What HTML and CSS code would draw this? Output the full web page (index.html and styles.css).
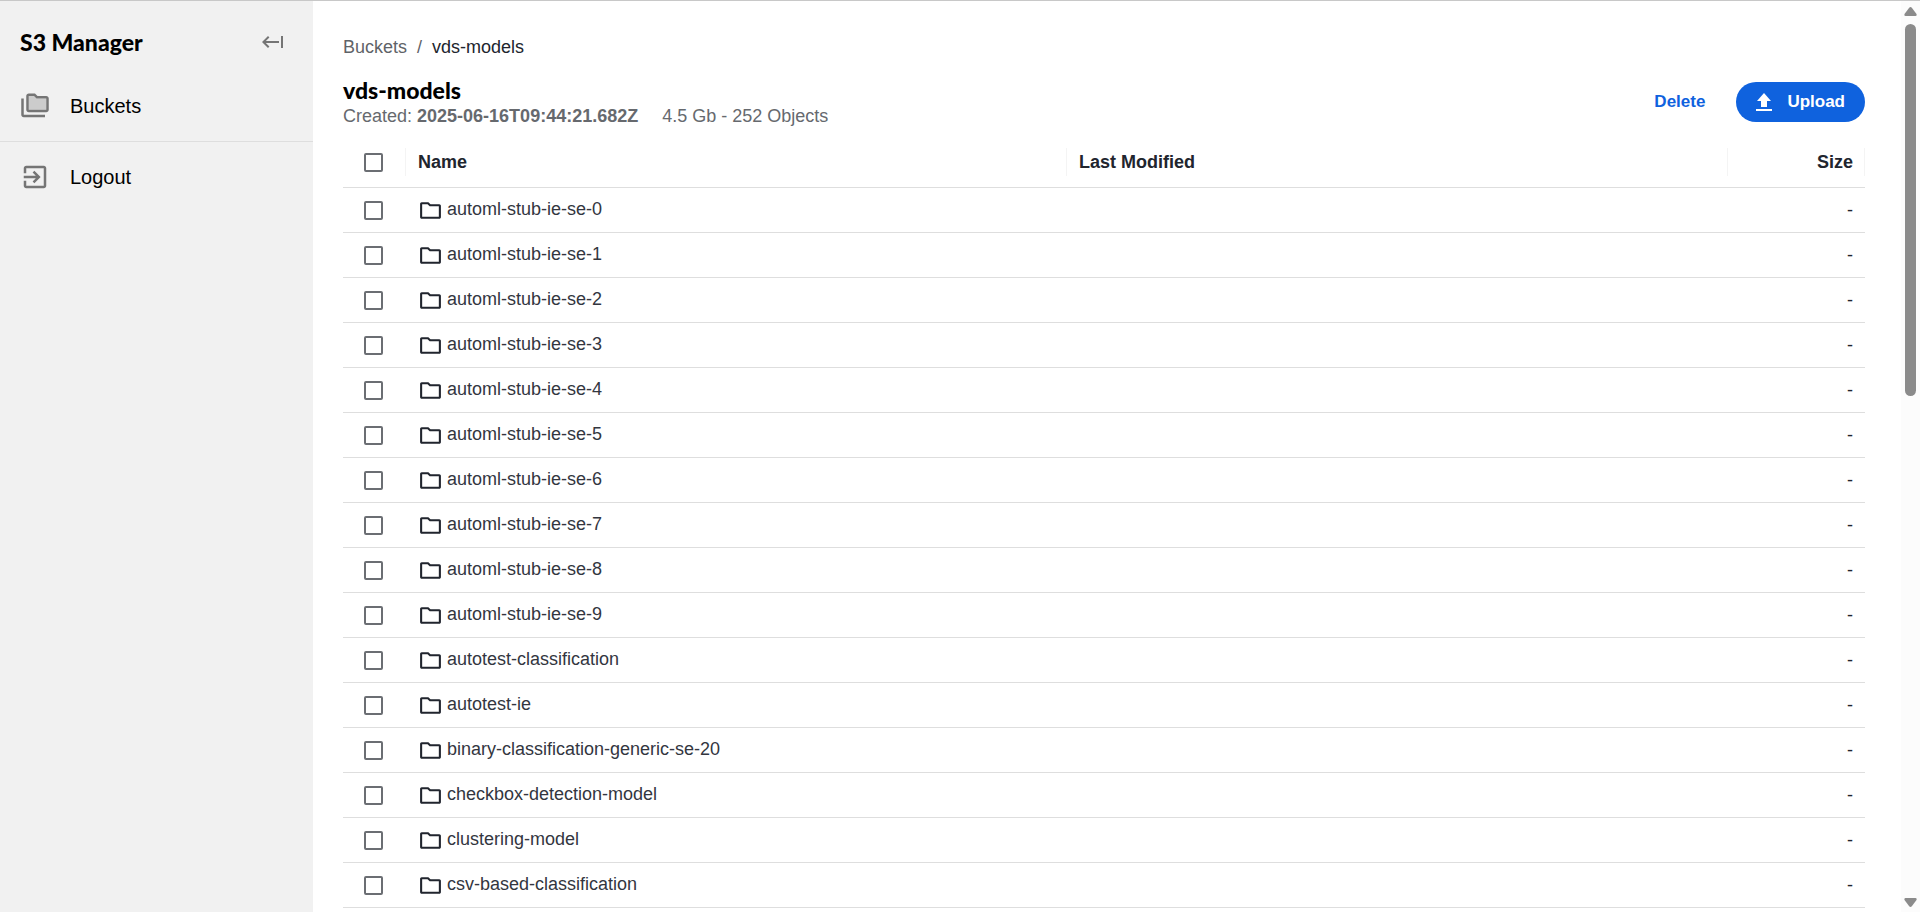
FILE: index.html
```html
<!DOCTYPE html>
<html lang="en">
<head>
  <meta charset="UTF-8">
  <title>S3 Manager</title>
  <link rel="stylesheet" href="styles.css">
</head>
<body>

<div class="app">
  <aside class="sidebar">
    <div class="sidebar-header">
      <span class="brand">S3 Manager</span>
      <button class="collapse-btn" aria-label="Collapse menu">
        <svg width="24" height="24" viewBox="0 0 24 24"><path d="M8.410 7.410 4.830 11H18v2H4.830l3.580 3.590L7 18l-6-6 6-6zM20 6h2v12h-2z"/></svg>
      </button>
    </div>
    <nav>
      <a class="nav-item" href="#">
        <svg width="30" height="30" viewBox="0 0 24 24">
          <path class="tint" d="M7 4h4.17l2 2H21v9H7z"/>
          <path d="M3 6H1v13c0 1.1.9 2 2 2h17v-2H3V6zM21 4h-7l-2-2H7c-1.1 0-2 .9-2 2v11c0 1.1.9 2 2 2h14c1.1 0 2-.9 2-2V6c0-1.1-.9-2-2-2zm0 11H7V4h4.17l2 2H21v9z"/>
        </svg>
        <span>Buckets</span>
      </a>
      <hr>
      <a class="nav-item" href="#">
        <svg width="30" height="30" viewBox="0 0 24 24"><path d="M10.09 15.59 11.5 17l5-5-5-5-1.41 1.41L12.67 11H3v2h9.67l-2.58 2.59zM19 3H5c-1.11 0-2 .9-2 2v4h2V5h14v14H5v-4H3v4c0 1.1.89 2 2 2h14c1.1 0 2-.9 2-2V5c0-1.1-.9-2-2-2z"/></svg>
        <span>Logout</span>
      </a>
    </nav>
  </aside>

  <main class="content">
    <div class="breadcrumb">
      <a href="#">Buckets</a>
      <span>/</span>
      <span class="current">vds-models</span>
    </div>

    <header class="bucket-header">
      <div>
        <h1>vds-models</h1>
        <div class="meta">
          <span>Created: <strong>2025-06-16T09:44:21.682Z</strong></span>
          <span>4.5 Gb - 252 Objects</span>
        </div>
      </div>
      <div class="actions">
        <button class="delete-btn">Delete</button>
        <button class="upload-btn">
          <svg width="16" height="18" viewBox="0 0 16 18"><path d="M8 0 1 8h4v6h6V8h4zM0 16h16v2H0z"/></svg>
          Upload
        </button>
      </div>
    </header>

    <table id="objectsTable">
      <thead>
        <tr>
          <th class="col-check"><input type="checkbox" aria-label="Select all"></th>
          <th>Name</th>
          <th>Last Modified</th>
          <th class="col-size">Size</th>
        </tr>
      </thead>
      <tbody></tbody>
    </table>
  </main>

  <div class="scrollbar" aria-hidden="true">
    <svg width="13" height="9" viewBox="0 0 13 9"><path d="M5 1Q6.500 -1 8 1L12.500 7Q13 9 11.500 9H1.500Q0 9 .5 7z"/></svg>
    <div class="track"><div class="thumb"></div></div>
    <svg width="13" height="9" viewBox="0 0 13 9"><path d="M5 8Q6.500 10 8 8L12.500 2Q13 0 11.500 0H1.500Q0 0 .5 2z"/></svg>
  </div>
</div>

<script>
  const folders = [
    'automl-stub-ie-se-0',
    'automl-stub-ie-se-1',
    'automl-stub-ie-se-2',
    'automl-stub-ie-se-3',
    'automl-stub-ie-se-4',
    'automl-stub-ie-se-5',
    'automl-stub-ie-se-6',
    'automl-stub-ie-se-7',
    'automl-stub-ie-se-8',
    'automl-stub-ie-se-9',
    'autotest-classification',
    'autotest-ie',
    'binary-classification-generic-se-20',
    'checkbox-detection-model',
    'clustering-model',
    'csv-based-classification'
  ];

  const folderIcon = '<svg width="25" height="25" viewBox="0 0 24 24"><path d="M9.170 6l2 2H20v10H4V6h5.170M10 4H3.500C2.700 4 2 4.700 2 5.500v13c0 .8.7 1.500 1.500 1.500h17c.8 0 1.500-.7 1.500-1.500v-11c0-.8-.7-1.500-1.500-1.500H12l-2-2z"/></svg>';

  document.querySelector('#objectsTable tbody').innerHTML = folders.map(name => `
    <tr>
      <td class="col-check"><input type="checkbox" aria-label="Select ${name}"></td>
      <td><a class="object" href="#">${folderIcon}<span>${name}</span></a></td>
      <td></td>
      <td class="col-size">-</td>
    </tr>`).join('');
</script>

</body>
</html>
```
FILE: styles.css
```css
* {
  box-sizing: border-box;
}
body {
  margin: 0;
  font-family: "Liberation Sans", Arial, sans-serif;
  font-size: 18px;
  line-height: 22px;
  color: #21252e;
  background-color: #fff;
}
a {
  color: inherit;
  text-decoration: none;
}
button {
  font: inherit;
  border: none;
  padding: 0;
  background: none;
  cursor: pointer;
}
svg {
  display: block;
  flex: none;
}
.app {
  display: flex;
  height: 100vh;
  overflow: hidden;
  border-top: 1px solid #c8c8c8;
}

/* sidebar */
.sidebar {
  width: 313px;
  flex: none;
  background-color: #f1f1f1;
  color: #000;
}
.sidebar svg {
  fill: #757575;
}
.sidebar .tint {
  fill: #ccc;
}
.sidebar-header {
  display: flex;
  justify-content: space-between;
  align-items: center;
  height: 70px;
  padding: 12px 28px 0 20px;
}
.brand, h1 {
  font-family: Lato, sans-serif;
  font-size: 23px;
  font-weight: 900;
  line-height: 28px;
  color: #000;
}
.nav-item {
  display: flex;
  align-items: center;
  gap: 20px;
  height: 70px;
  padding: 0 20px;
  font-size: 20px;
}
hr {
  margin: 0;
  border: none;
  border-top: 1px solid #dedede;
}

/* content */
.content {
  flex: 1;
  min-width: 0;
  padding: 35px 36px 0 30px;
}
.breadcrumb {
  display: flex;
  gap: 10px;
  color: #5f6368;
}
.breadcrumb .current {
  color: #21252e;
}
.bucket-header {
  display: flex;
  justify-content: space-between;
  align-items: center;
  margin-top: 18px;
}
h1 {
  margin: 0 0 1px;
}
.meta {
  display: flex;
  gap: 24px;
  color: #66696e;
}
.actions {
  display: flex;
  align-items: center;
  gap: 31px;
  font-size: 17px;
  font-weight: bold;
}
.delete-btn {
  color: #0f62de;
}
.upload-btn {
  display: flex;
  align-items: center;
  gap: 15px;
  height: 40px;
  padding: 0 20px;
  border-radius: 20px;
  background-color: #0f62de;
  color: #fff;
}
.upload-btn svg {
  fill: #fff;
}

/* table */
table {
  width: 100%;
  margin-top: 10px;
  border-collapse: collapse;
  table-layout: fixed;
}
th, td {
  height: 45px;
  padding: 0 12px;
  border-bottom: 1px solid #dedede;
  text-align: left;
}
th {
  height: 50px;
  background: linear-gradient(#f4f4f4, #f4f4f4) right center / 1px 28px no-repeat;
}
.col-check {
  width: 63px;
  padding: 0 0 0 21px;
}
.col-size {
  width: 137px;
  text-align: right;
}
input[type="checkbox"] {
  appearance: none;
  display: block;
  width: 19px;
  height: 19px;
  margin: 2px 0 0;
  border: 2px solid #6b6e73;
  border-radius: 2px;
  background-color: #fff;
}
input[type="checkbox"]:checked {
  background-color: #0f62de;
}
.object {
  display: flex;
  align-items: center;
  gap: 4px;
  padding-top: 1px;
  color: #33363f;
}
.object span {
  padding-bottom: 3px;
}
.object svg {
  fill: #21252e;
}

/* scrollbar */
.scrollbar {
  display: flex;
  flex-direction: column;
  align-items: center;
  gap: 8px;
  width: 19px;
  flex: none;
  padding: 6px 0 5px;
  background-color: #fcfcfc;
}
.scrollbar svg {
  fill: #8b8b8b;
}
.track {
  flex: 1;
  width: 11px;
}
.thumb {
  height: 43%;
  border-radius: 6px;
  background-color: #8b8b8b;
}
```
